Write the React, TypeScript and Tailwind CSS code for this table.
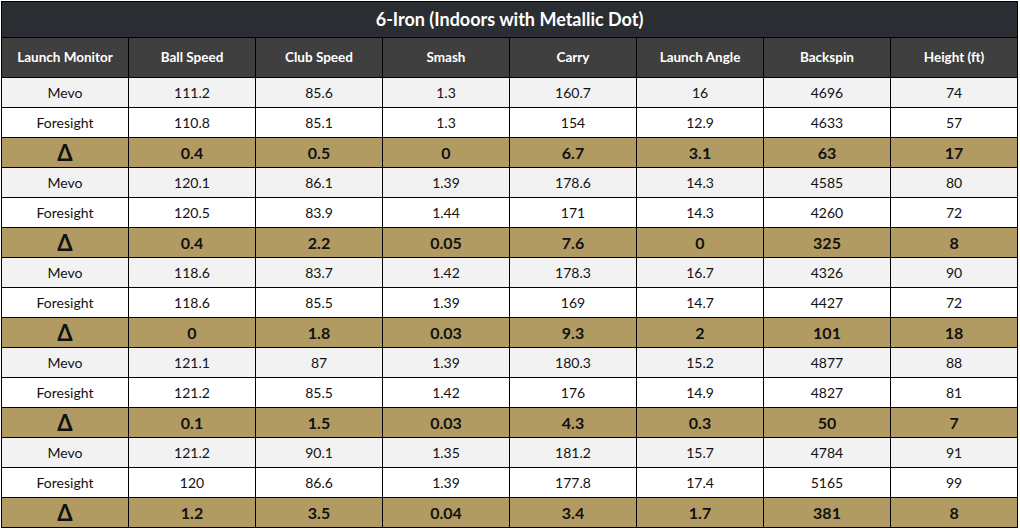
type Group = { mevo: string[]; fore: string[]; delta: string[] }

const HEADERS = ["Launch Monitor", "Ball Speed", "Club Speed", "Smash", "Carry", "Launch Angle", "Backspin", "Height (ft)"]

const GROUPS: Group[] = [
  {
    mevo: ["111.2", "85.6", "1.3", "160.7", "16", "4696", "74"],
    fore: ["110.8", "85.1", "1.3", "154", "12.9", "4633", "57"],
    delta: ["0.4", "0.5", "0", "6.7", "3.1", "63", "17"],
  },
  {
    mevo: ["120.1", "86.1", "1.39", "178.6", "14.3", "4585", "80"],
    fore: ["120.5", "83.9", "1.44", "171", "14.3", "4260", "72"],
    delta: ["0.4", "2.2", "0.05", "7.6", "0", "325", "8"],
  },
  {
    mevo: ["118.6", "83.7", "1.42", "178.3", "16.7", "4326", "90"],
    fore: ["118.6", "85.5", "1.39", "169", "14.7", "4427", "72"],
    delta: ["0", "1.8", "0.03", "9.3", "2", "101", "18"],
  },
  {
    mevo: ["121.1", "87", "1.39", "180.3", "15.2", "4877", "88"],
    fore: ["121.2", "85.5", "1.42", "176", "14.9", "4827", "81"],
    delta: ["0.1", "1.5", "0.03", "4.3", "0.3", "50", "7"],
  },
  {
    mevo: ["121.2", "90.1", "1.35", "181.2", "15.7", "4784", "91"],
    fore: ["120", "86.6", "1.39", "177.8", "17.4", "5165", "99"],
    delta: ["1.2", "3.5", "0.04", "3.4", "1.7", "381", "8"],
  },
]

const cell = "border border-black text-center align-middle p-0"

export default function App() {
  return (
    <div className="bg-white w-[1020px] h-[531px] pl-px pt-px font-['Lato','Liberation_Sans',sans-serif]">
      <table className="border-collapse table-fixed w-[1017px]">
        <colgroup>
          {HEADERS.map(h => <col key={h} className="w-[127px]" />)}
        </colgroup>
        <thead>
          <tr className="h-[36px]">
            <th colSpan={8} className={`${cell} bg-[#2a2d31] text-white text-[18px] font-bold`}>
              6-Iron (Indoors with Metallic Dot)
            </th>
          </tr>
          <tr className="h-[40px]">
            {HEADERS.map(h => (
              <th key={h} className={`${cell} bg-[#3f3f3f] text-white text-[13.5px] font-bold`}>{h}</th>
            ))}
          </tr>
        </thead>
        <tbody>
          {GROUPS.map((g, i) => (
            <Rows key={i} g={g} />
          ))}
        </tbody>
      </table>
    </div>
  )
}

function Rows({ g }: { g: Group }) {
  return (
    <>
      <tr className="h-[30px] bg-[#f2f2f2] text-[14px] text-[#111]">
        <td className={cell}>Mevo</td>
        {g.mevo.map((v, i) => <td key={i} className={cell}>{v}</td>)}
      </tr>
      <tr className="h-[30px] bg-white text-[14px] text-[#111]">
        <td className={cell}>Foresight</td>
        {g.fore.map((v, i) => <td key={i} className={cell}>{v}</td>)}
      </tr>
      <tr className="h-[30px] bg-[#b19b63] text-[16px] font-bold text-[#111]">
        <td className={`${cell} text-[22px] leading-none`}>Δ</td>
        {g.delta.map((v, i) => <td key={i} className={cell}>{v}</td>)}
      </tr>
    </>
  )
}
